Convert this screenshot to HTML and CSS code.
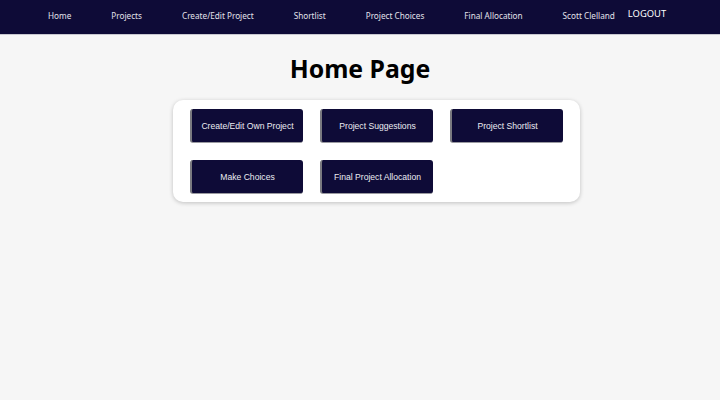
FILE: index.html
```html
<!DOCTYPE html>
<html>
<head>
<meta charset="utf-8">
<link rel="stylesheet" href="styles.css">
</head>
<body>
<nav class="nav">
  <a class="nav-link" href="#">Home</a>
  <a class="nav-link" href="#">Projects</a>
  <a class="nav-link" href="#">Create/Edit Project</a>
  <a class="nav-link" href="#">Shortlist</a>
  <a class="nav-link" href="#">Project Choices</a>
  <a class="nav-link" href="#">Final Allocation</a>
  <span class="nav-user">Scott Clelland</span>
  <a class="logout" href="#">LOGOUT</a>
</nav>
<main class="main">
  <h1 class="title">Home Page</h1>
  <div class="card">
    <button class="btn">Create/Edit Own Project</button>
    <button class="btn">Project Suggestions</button>
    <button class="btn">Project Shortlist</button>
    <button class="btn">Make Choices</button>
    <button class="btn">Final Project Allocation</button>
  </div>
</main>
</body>
</html>
```
FILE: styles.css
```css
html, body {
  margin: 0;
  padding: 0;
}
body {
  background: #f6f6f6;
  font-family: "Noto Sans", "Open Sans", sans-serif;
  width: 720px;
  height: 400px;
  overflow: hidden;
}
.nav {
  height: 35px;
  background: #0e0b37;
  display: flex;
  align-items: flex-start;
  padding-left: 48px;
  box-sizing: border-box;
  border-bottom: 1px solid #c8c8d0;
}
.nav-link, .nav-user {
  color: #e2e2ea;
  text-decoration: none;
  font-size: 8.2px;
  line-height: 12px;
  margin-top: 10px;
  margin-right: 40px;
}
.nav-user {
  margin-right: 13px;
}
.logout {
  color: #ffffff;
  text-decoration: none;
  font-size: 9.4px;
  line-height: 12px;
  margin-top: 8px;
}
.main {
  display: flex;
  flex-direction: column;
  align-items: center;
}
.title {
  margin: 17px 0 0;
  font-size: 24.8px;
  line-height: 32px;
  font-weight: 700;
  color: #000;
}
.card {
  margin-top: 16px;
  margin-left: 33px;
  width: 407px;
  box-sizing: border-box;
  background: #fff;
  border-radius: 10px;
  box-shadow: 0 1px 4px rgba(0, 0, 0, 0.22);
  padding: 9px 16px 8px 17px;
  display: grid;
  grid-template-columns: repeat(3, 113px);
  column-gap: 17px;
  row-gap: 17px;
}
.btn {
  height: 34px;
  background: #0e0b37;
  color: #ececf2;
  font-family: "Liberation Sans", Arial, sans-serif;
  font-size: 8.6px;
  border: none;
  border-left: 2px solid #7a7a80;
  border-bottom: 1px solid #9a9aa0;
  border-radius: 3px;
  padding: 0;
}
```
